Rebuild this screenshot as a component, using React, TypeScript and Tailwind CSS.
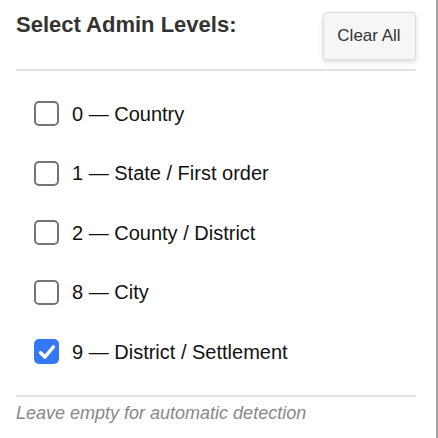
import { useState } from "react";

type Level = {
  id: number;
  label: string;
};

const LEVELS: Level[] = [
  { id: 0, label: "Country" },
  { id: 1, label: "State / First order" },
  { id: 2, label: "County / District" },
  { id: 8, label: "City" },
  { id: 9, label: "District / Settlement" },
];

function Box({ checked }: { checked: boolean }) {
  if (checked) {
    return (
      <span className="flex h-[25px] w-[25px] shrink-0 items-center justify-center rounded-[5px] bg-[#3478f6]">
        <svg viewBox="0 0 24 24" className="h-[22px] w-[22px]" fill="none">
          <path d="M5 12.8l4.6 4.7L19 6.5" stroke="white" strokeWidth="3.8" strokeLinecap="round" strokeLinejoin="round" />
        </svg>
      </span>
    );
  }
  return <span className="block h-[25px] w-[25px] shrink-0 rounded-[5px] border-2 border-[#757575] bg-white" />;
}

export default function App() {
  const [selected, setSelected] = useState<number[]>([9]);

  const toggle = (id: number) => {
    setSelected((prev) => (prev.includes(id) ? prev.filter((x) => x !== id) : [...prev, id]));
  };

  return (
    <div className="flex h-[438px] w-[438px] bg-white font-['Liberation_Sans',Arial,sans-serif]">
      <div className="flex w-[436px] flex-col pl-4 pr-5">
        <div className="flex items-start justify-between pt-3">
          <h2 className="text-[22px] font-bold leading-[1.2] text-[#333]">Select Admin Levels:</h2>
          <button
            type="button"
            onClick={() => setSelected([])}
            className="mr-[0.5px] h-[48px] w-[93px] rounded-[4px] border border-[#dcdcdc] bg-[#f6f6f6] text-[17px] text-[#333] shadow-[0_2px_5px_rgba(0,0,0,0.15)]"
          >
            Clear All
          </button>
        </div>
        <div className="mt-[9px] h-[2px] bg-[#e3e3e3]" />
        <div className="mt-[13px] flex flex-col">
          {LEVELS.map((level) => (
            <label
              key={level.id}
              onClick={() => toggle(level.id)}
              className="flex h-[59.5px] cursor-pointer items-center gap-[13px] pl-[18px]"
            >
              <Box checked={selected.includes(level.id)} />
              <span className="text-[20px] text-[#111]">
                {level.id} — {level.label}
              </span>
            </label>
          ))}
        </div>
        <div className="mt-[13.5px] h-[2px] bg-[#e3e3e3]" />
        <p className="mt-[6px] text-[18px] leading-[1.2] italic text-[#888]">Leave empty for automatic detection</p>
      </div>
      <div className="h-full w-[2px] bg-[#a3a3a3]" />
    </div>
  );
}
